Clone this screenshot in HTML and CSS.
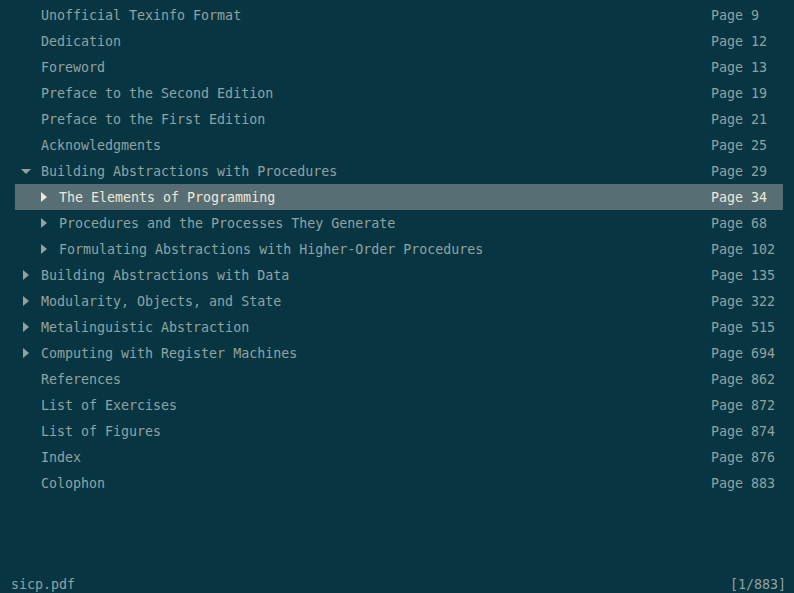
FILE: index.html
```html
<!DOCTYPE html>
<html>
<head>
<meta charset="utf-8">
<link rel="stylesheet" href="styles.css">
</head>
<body>
<div class="app">
  <div class="toc">
    <div class="row"><div class="title"><span class="twisty"></span><span class="label">Unofficial Texinfo Format</span></div><div class="page">Page 9</div></div>
    <div class="row"><div class="title"><span class="twisty"></span><span class="label">Dedication</span></div><div class="page">Page 12</div></div>
    <div class="row"><div class="title"><span class="twisty"></span><span class="label">Foreword</span></div><div class="page">Page 13</div></div>
    <div class="row"><div class="title"><span class="twisty"></span><span class="label">Preface to the Second Edition</span></div><div class="page">Page 19</div></div>
    <div class="row"><div class="title"><span class="twisty"></span><span class="label">Preface to the First Edition</span></div><div class="page">Page 21</div></div>
    <div class="row"><div class="title"><span class="twisty"></span><span class="label">Acknowledgments</span></div><div class="page">Page 25</div></div>
    <div class="row"><div class="title"><span class="twisty"><i class="down"></i></span><span class="label">Building Abstractions with Procedures</span></div><div class="page">Page 29</div></div>
    <div class="row selected"><div class="title lvl1"><span class="twisty"><i class="right"></i></span><span class="label">The Elements of Programming</span></div><div class="page">Page 34</div></div>
    <div class="row"><div class="title lvl1"><span class="twisty"><i class="right"></i></span><span class="label">Procedures and the Processes They Generate</span></div><div class="page">Page 68</div></div>
    <div class="row"><div class="title lvl1"><span class="twisty"><i class="right"></i></span><span class="label">Formulating Abstractions with Higher-Order Procedures</span></div><div class="page">Page 102</div></div>
    <div class="row"><div class="title"><span class="twisty"><i class="right"></i></span><span class="label">Building Abstractions with Data</span></div><div class="page">Page 135</div></div>
    <div class="row"><div class="title"><span class="twisty"><i class="right"></i></span><span class="label">Modularity, Objects, and State</span></div><div class="page">Page 322</div></div>
    <div class="row"><div class="title"><span class="twisty"><i class="right"></i></span><span class="label">Metalinguistic Abstraction</span></div><div class="page">Page 515</div></div>
    <div class="row"><div class="title"><span class="twisty"><i class="right"></i></span><span class="label">Computing with Register Machines</span></div><div class="page">Page 694</div></div>
    <div class="row"><div class="title"><span class="twisty"></span><span class="label">References</span></div><div class="page">Page 862</div></div>
    <div class="row"><div class="title"><span class="twisty"></span><span class="label">List of Exercises</span></div><div class="page">Page 872</div></div>
    <div class="row"><div class="title"><span class="twisty"></span><span class="label">List of Figures</span></div><div class="page">Page 874</div></div>
    <div class="row"><div class="title"><span class="twisty"></span><span class="label">Index</span></div><div class="page">Page 876</div></div>
    <div class="row"><div class="title"><span class="twisty"></span><span class="label">Colophon</span></div><div class="page">Page 883</div></div>
  </div>
  <div class="status">
    <span>sicp.pdf</span>
    <span>[1/883]</span>
  </div>
</div>
</body>
</html>
```
FILE: styles.css
```css
html, body {
  margin: 0;
  padding: 0;
  background: #073642;
}
body {
  font-family: "DejaVu Sans Mono", "Liberation Mono", monospace;
  font-size: 13.3px;
  color: #93a1a1;
}
.app {
  height: 593px;
  display: flex;
  flex-direction: column;
}
.toc {
  flex: 1;
  padding: 2px 11px 0 15px;
}
.row {
  display: grid;
  grid-template-columns: 1fr 72px;
  height: 26px;
  white-space: pre;
}
.row.selected {
  background: #586e75;
  color: #eee8d5;
}
.title {
  display: flex;
  align-items: center;
  height: 26px;
}
.title.lvl1 {
  padding-left: 18px;
}
.label, .page {
  padding-top: 2px;
  line-height: 24px;
  height: 24px;
}
.twisty {
  width: 26px;
  height: 26px;
  flex: none;
  display: flex;
  align-items: center;
}
.right {
  display: block;
  width: 0;
  height: 0;
  margin-left: 8px;
  border-left: 6px solid currentColor;
  border-top: 5px solid transparent;
  border-bottom: 5px solid transparent;
}
.down {
  display: block;
  width: 0;
  height: 0;
  margin-left: 6px;
  margin-top: 1px;
  border-top: 5px solid currentColor;
  border-left: 5px solid transparent;
  border-right: 5px solid transparent;
}
.status {
  height: 17px;
  padding: 1px 8px 0 11px;
  line-height: 18px;
  display: flex;
  justify-content: space-between;
}
```
